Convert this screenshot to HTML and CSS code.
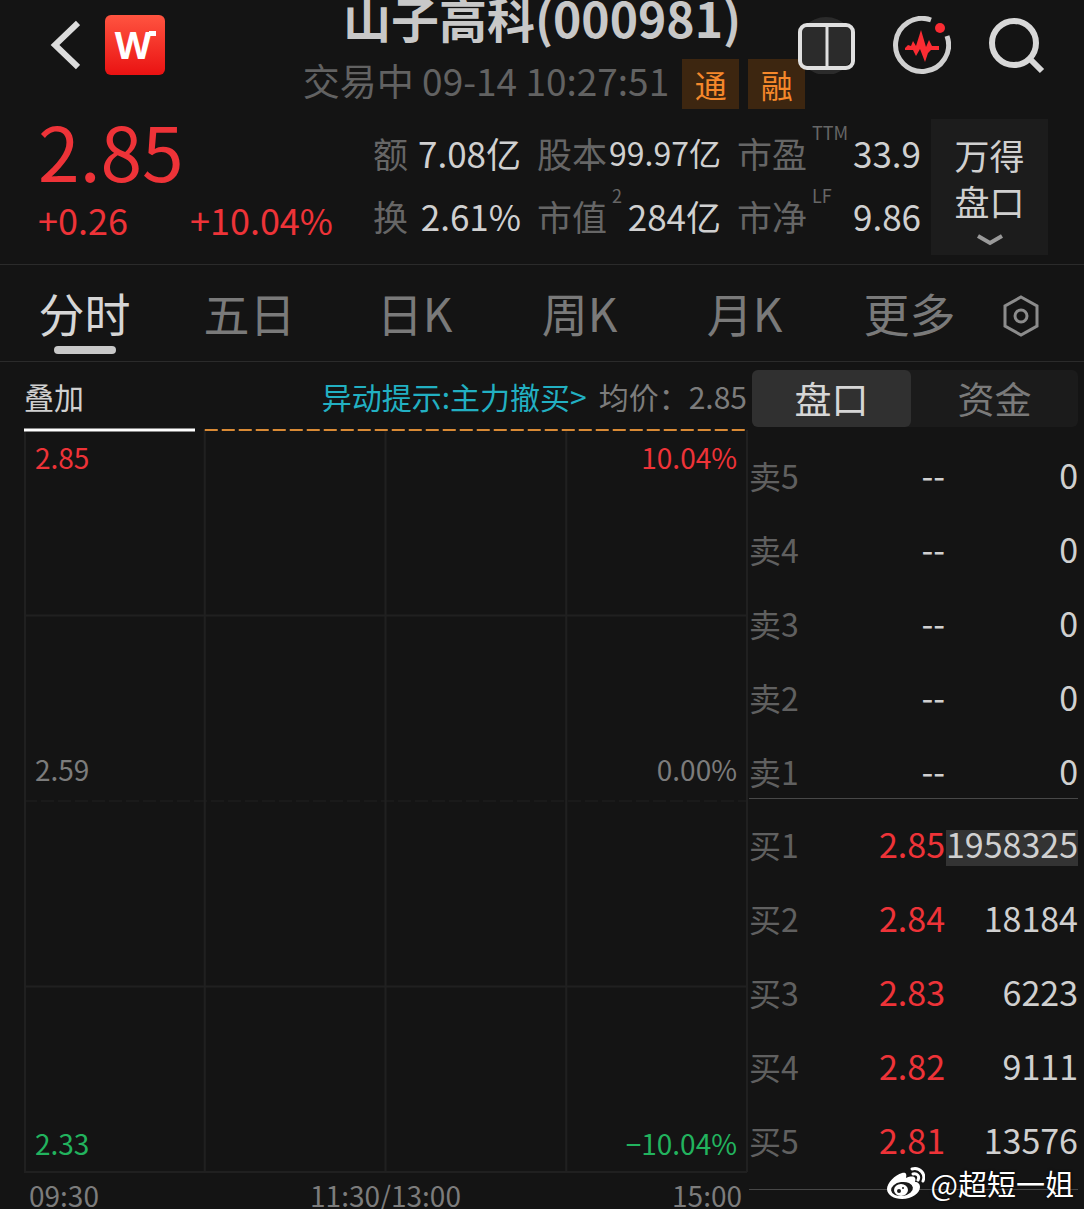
FILE: index.html
```
<!DOCTYPE html>
<html lang="zh-CN">
<head>
  <meta charset="UTF-8">
  <meta name="viewport" content="width=device-width, initial-scale=1.0">
  <title>山子高科(000981)</title>
  <link rel="stylesheet" href="styles.css">
</head>
<body>
  <header class="header">
    <div class="title-block">
      <h1>山子高科(000981)</h1>
      <div class="status">
        <span class="status-text">交易中 09-14 10:27:51</span>
        <span class="tag">通</span>
        <span class="tag">融</span>
      </div>
    </div>

    <nav class="toolbar">
      <button class="icon-btn" aria-label="返回">
        <svg width="30" height="50" viewBox="0 0 30 50">
          <path d="M28 3L5 25L28 47" fill="none" stroke="#dcdcdc" stroke-width="6"/>
        </svg>
      </button>
      <button class="icon-btn logo" aria-label="万得">
        <svg width="60" height="60" viewBox="0 0 60 60">
          <text class="logo-letter" x="28" y="44" text-anchor="middle">W</text>
          <rect x="44" y="16" width="7" height="5" fill="#fff"/>
        </svg>
      </button>
      <span class="spacer"></span>
      <button class="icon-btn" aria-label="分屏">
        <svg width="58" height="58" viewBox="0 0 58 58">
          <circle cx="28" cy="30" r="29" fill="#2b2b2b"/>
          <rect x="2" y="9" width="53" height="43" rx="7" fill="none" stroke="#e0e0e0" stroke-width="4"/>
          <path d="M29 9V52" stroke="#e0e0e0" stroke-width="3"/>
        </svg>
      </button>
      <button class="icon-btn" aria-label="异动">
        <svg width="58" height="58" viewBox="0 0 58 58">
          <path d="M38 4A26.500 26.500 0 1 0 54 20" fill="none" stroke="#d0d0d0" stroke-width="5"/>
          <circle cx="47" cy="12" r="5" fill="#fb2c33"/>
          <path d="M12 32L15 29L18 30L20 25L23 30L28 14L33 31L36 24L39 30H46V34L38 34L35 37L32 46L27 33L23 40L20 34H12Z" fill="#fb2c33"/>
        </svg>
      </button>
      <button class="icon-btn" aria-label="搜索">
        <svg width="58" height="58" viewBox="0 0 58 58">
          <circle cx="26" cy="27" r="22" fill="none" stroke="#d8d8d8" stroke-width="6"/>
          <path d="M41 42L54 55" stroke="#d8d8d8" stroke-width="6"/>
        </svg>
      </button>
    </nav>
  </header>

  <section class="quote">
    <div class="price-block">
      <div class="price">2.85</div>
      <div class="change"><span>+0.26</span><span>+10.04%</span></div>
    </div>
    <dl class="stats">
      <div class="stat"><dt>额</dt><dd>7.08亿</dd></div>
      <div class="stat"><dt>股本</dt><dd class="small">99.97亿</dd></div>
      <div class="stat"><dt>市盈<sup>TTM</sup></dt><dd>33.9</dd></div>
      <div class="stat"><dt>换</dt><dd>2.61%</dd></div>
      <div class="stat"><dt>市值<sup>2</sup></dt><dd>284亿</dd></div>
      <div class="stat"><dt>市净<sup>LF</sup></dt><dd>9.86</dd></div>
    </dl>
    <button class="wind-btn">
      <span>万得</span>
      <span>盘口</span>
      <svg width="26" height="12" viewBox="0 0 26 12">
        <path d="M1 2L13 9L25 2" fill="none" stroke="#9a9a9a" stroke-width="4"/>
      </svg>
    </button>
  </section>

  <nav class="tabs">
    <button class="tab active">分时</button>
    <button class="tab">五日</button>
    <button class="tab">日K</button>
    <button class="tab">周K</button>
    <button class="tab">月K</button>
    <button class="tab">更多</button>
    <button class="icon-btn gear" aria-label="设置">
      <svg width="38" height="42" viewBox="0 0 38 42">
        <path d="M19 2L35 11V31L19 40L3 31V11Z" fill="none" stroke="#8c8c8c" stroke-width="3"/>
        <circle cx="19" cy="21" r="6" fill="none" stroke="#8c8c8c" stroke-width="3"/>
      </svg>
    </button>
  </nav>

  <main class="main">
    <section class="chart-panel">
      <div class="chart-bar">
        <button class="overlay-btn">叠加</button>
        <a class="alert" href="#">异动提示:主力撤买&gt;</a>
        <span class="avg">均价：2.85</span>
      </div>
      <div class="chart">
        <svg class="chart-svg" width="100%" height="100%">
          <!-- grid -->
          <g class="grid">
            <line x1="1" y1="0" x2="1" y2="100%"/>
            <line x1="25%" y1="0" x2="25%" y2="100%"/>
            <line x1="50%" y1="0" x2="50%" y2="100%"/>
            <line x1="75%" y1="0" x2="75%" y2="100%"/>
            <line x1="100%" y1="0" x2="100%" y2="100%"/>
            <line x1="0" y1="25%" x2="100%" y2="25%"/>
            <line class="zero" x1="0" y1="50%" x2="100%" y2="50%"/>
            <line x1="0" y1="75%" x2="100%" y2="75%"/>
            <line x1="0" y1="100%" x2="100%" y2="100%"/>
          </g>
          <!-- price -->
          <line class="limit-line" x1="25%" y1="0" x2="100%" y2="0"/>
          <line class="price-line" x1="0" y1="0" x2="171" y2="0"/>
          <!-- scale -->
          <text class="up" x="11" y="0" dy="39">2.85</text>
          <text class="up end" x="100%" y="0" dx="-10" dy="39">10.04%</text>
          <text class="flat" x="11" y="50%" dy="-20">2.59</text>
          <text class="flat end" x="100%" y="50%" dx="-10" dy="-20">0.00%</text>
          <text class="down" x="11" y="100%" dy="-17">2.33</text>
          <text class="down end" x="100%" y="100%" dx="-10" dy="-17">−10.04%</text>
        </svg>
      </div>
      <div class="time-axis"><span>09:30</span><span>11:30/13:00</span><span>15:00</span></div>
    </section>

    <section class="book">
      <div class="segment">
        <button class="active">盘口</button>
        <button>资金</button>
      </div>
      <table class="levels sell">
        <tr><th>卖5</th><td>--</td><td>0</td></tr>
        <tr><th>卖4</th><td>--</td><td>0</td></tr>
        <tr><th>卖3</th><td>--</td><td>0</td></tr>
        <tr><th>卖2</th><td>--</td><td>0</td></tr>
        <tr><th>卖1</th><td>--</td><td>0</td></tr>
      </table>
      <table class="levels buy">
        <tr><th>买1</th><td>2.85</td><td><span class="flash">1958325</span></td></tr>
        <tr><th>买2</th><td>2.84</td><td>18184</td></tr>
        <tr><th>买3</th><td>2.83</td><td>6223</td></tr>
        <tr><th>买4</th><td>2.82</td><td>9111</td></tr>
        <tr><th>买5</th><td>2.81</td><td>13576</td></tr>
      </table>
    </section>
  </main>

  <div class="watermark">
    <svg width="38" height="32" viewBox="0 0 38 32">
      <path d="M15 6C8 8 0 16 0 22C0 28 7 32 15 32C25 32 33 26 33 20C33 17 31 15 28 15C30 10 26 8 19 11C20 7 19 5 15 6Z" fill="#fff"/>
      <ellipse cx="15" cy="22" rx="11" ry="7" fill="#1a1a1a" transform="rotate(-8 15 22)"/>
      <ellipse cx="14" cy="23" rx="7" ry="6" fill="#fff"/>
      <circle cx="12" cy="24" r="2" fill="#1a1a1a"/>
      <circle cx="16" cy="21" r="1" fill="#1a1a1a"/>
      <path d="M25 2C33 0 39 7 36 14M26 7C30 6 33 9 31 13" fill="none" stroke="#fff" stroke-width="3" stroke-linecap="round"/>
    </svg>
    <span>@超短一姐</span>
  </div>
</body>
</html>
```

FILE: styles.css
```
* {
  box-sizing: border-box;
}

body {
  position: relative;
  margin: 0;
  background: #141414;
  color: #d0d0d0;
  font-family: "Noto Sans CJK SC", "Noto Sans", sans-serif;
}

button {
  padding: 0;
  border: none;
  background: none;
  color: inherit;
  font: inherit;
  cursor: pointer;
}

svg {
  display: block;
}

/* header */
.header {
  display: grid;
}

.title-block,
.toolbar {
  grid-area: 1 / 1;
}

.title-block {
  display: flex;
  flex-direction: column;
  align-items: center;
  gap: 25px;
}

h1 {
  margin: 0;
  font-size: 48px;
  line-height: 34px;
  font-weight: 700;
  color: #c8c8c8;
}

.status {
  display: flex;
  gap: 9px;
  padding-left: 24px;
}

.status-text {
  margin-right: 4px;
  font-size: 37px;
  line-height: 42px;
  color: #626262;
}

.tag {
  width: 57px;
  background: #3d2610;
  color: #f5882b;
  font-size: 32px;
  line-height: 50px;
  text-align: center;
}

.toolbar {
  display: flex;
  align-items: center;
  align-self: start;
  gap: 37px;
  padding: 15px 38px 0 50px;
}

.logo {
  margin-left: -12px;
  border-radius: 6px;
  background: linear-gradient(#ff5440, #ea1212);
}

.logo-letter {
  fill: #fff;
  font: bold 38px "Noto Sans", sans-serif;
}

.spacer {
  flex: 1;
}

/* quote */
.quote {
  display: flex;
  gap: 10px;
  padding: 10px 36px 7px 38px;
  border-bottom: 1px solid #2b2b2b;
}

.price-block {
  flex: 0 0 325px;
  color: #ee3338;
}

.price {
  font-size: 75px;
  line-height: 62px;
}

.change {
  display: flex;
  gap: 62px;
  font-size: 36px;
  line-height: 76px;
}

.stats {
  flex: 1;
  display: grid;
  grid-template-columns: 148fr 184fr 184fr;
  grid-auto-rows: 63px;
  column-gap: 16px;
  margin: 0;
  padding-top: 2px;
}

.stat {
  display: flex;
  justify-content: space-between;
  font-size: 35px;
  line-height: 63px;
  white-space: nowrap;
}

.stat dt {
  color: #666;
}

.stat dd {
  margin: 0;
}

.stat .small {
  font-size: 32px;
}

sup {
  margin-left: 5px;
  font-size: 18px;
  line-height: 0;
  vertical-align: 28px;
}

.wind-btn {
  display: flex;
  flex-direction: column;
  align-items: center;
  flex: 0 0 117px;
  height: 136px;
  padding-top: 13px;
  background: #1c1c1c;
  font-size: 35px;
  line-height: 46px;
}

.wind-btn svg {
  margin-top: 10px;
}

/* period tabs */
.tabs {
  display: flex;
  padding: 0 35px 0 2px;
  border-bottom: 1px solid #2b2b2b;
}

.tab {
  position: relative;
  flex: 1;
  padding-bottom: 2px;
  font-size: 46px;
  line-height: 94px;
  color: #7a7a7a;
}

.tab.active {
  color: #d6d6d6;
}

.tab.active::after {
  content: "";
  position: absolute;
  left: 50%;
  bottom: 7px;
  width: 62px;
  height: 8px;
  margin-left: -31px;
  border-radius: 4px;
  background: #c8c8c8;
}

.gear {
  display: flex;
  align-items: center;
  justify-content: center;
  flex: 0 0 57px;
  padding-top: 6px;
}

/* chart */
.main {
  display: flex;
  gap: 2px;
  padding: 0 6px 0 24px;
}

.chart-panel {
  flex: 723;
  display: flex;
  flex-direction: column;
}

.chart-bar {
  display: flex;
  font-size: 30px;
  line-height: 68px;
  white-space: nowrap;
}

.alert {
  margin: 0 12px 0 auto;
  color: #22b0c2;
  text-decoration: none;
}

.avg {
  color: #7c7c7c;
}

.chart {
  flex: 1;
  position: relative;
}

.chart-svg {
  position: absolute;
  overflow: visible;
}

.grid line {
  stroke: #202020;
  stroke-width: 2;
}

.grid .zero {
  stroke-width: 1;
  stroke-dasharray: 13 4;
}

.limit-line {
  stroke: #d98a35;
  stroke-width: 2;
  stroke-dasharray: 13 4;
}

.price-line {
  stroke: #fff;
  stroke-width: 3;
}

.chart-svg text {
  font-size: 28px;
}

.chart-svg .end {
  text-anchor: end;
}

.up {
  fill: #ee3338;
}

.flat {
  fill: #7c7c7c;
}

.down {
  fill: #22b35e;
}

.time-axis {
  display: flex;
  justify-content: space-between;
  padding: 9px 5px 0;
  font-size: 28px;
  line-height: 28px;
  color: #7c7c7c;
}

/* order book */
.book {
  flex: 329;
  padding: 8px 0 19px;
}

.segment {
  display: flex;
  margin: 0 0 24px 3px;
  border-radius: 6px;
  background: #1b1b1b;
}

.segment button {
  flex: 167;
  border-radius: 6px;
  font-size: 37px;
  line-height: 57px;
  color: #7a7a7a;
}

.segment .active {
  flex: 159;
  background: #303030;
  color: #d6d6d6;
}

.levels {
  width: 100%;
  border-collapse: separate;
  border-spacing: 0;
  border-bottom: 1px solid #484848;
  font-size: 34px;
  line-height: 48px;
}

.levels th,
.levels td {
  padding: 0 0 26px;
  text-align: right;
}

.levels th {
  font-size: 32px;
  font-weight: normal;
  text-align: left;
  color: #606060;
}

.levels td:last-child {
  width: 133px;
}

.levels tr:last-child > * {
  padding-bottom: 0;
}

.sell {
  padding-bottom: 3px;
}

.buy {
  padding: 21px 0 25px;
}

.buy td:nth-child(2) {
  color: #ee3338;
}

.flash {
  display: inline-block;
  padding-bottom: 8px;
  background: #333;
  line-height: 28px;
}

.watermark {
  position: absolute;
  right: 10px;
  bottom: 2px;
  display: flex;
  align-items: center;
  gap: 6px;
  color: #fff;
  font-size: 29px;
  line-height: 48px;
  text-shadow: 0 0 3px #000;
}
```
